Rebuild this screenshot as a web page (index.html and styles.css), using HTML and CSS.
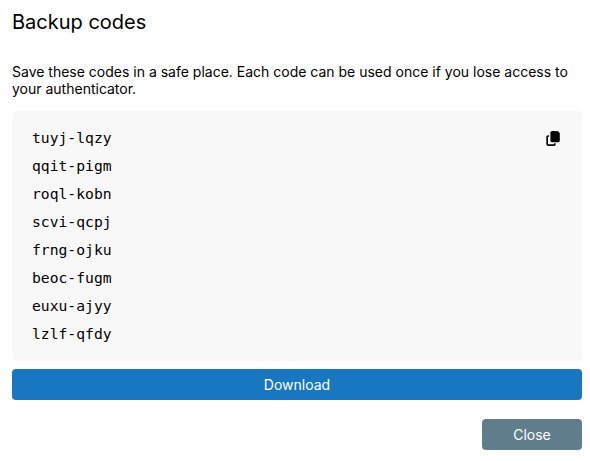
FILE: index.html
```html
<!DOCTYPE html>
<html lang="en">
	<head>
		<title>Backup codes</title>
		<meta charset="UTF-8" />
		<link rel="stylesheet" href="styles.css">
	</head>
	<body>
		<div class="dialog">
			<h2 class="title">Backup codes</h2>
			<p class="hint">Save these codes in a safe place. Each code can be used once if you lose access to your authenticator.</p>
			<div class="codes-box">
				<ul class="codes">
					<li>tuyj-lqzy</li>
					<li>qqit-pigm</li>
					<li>roql-kobn</li>
					<li>scvi-qcpj</li>
					<li>frng-ojku</li>
					<li>beoc-fugm</li>
					<li>euxu-ajyy</li>
					<li>lzlf-qfdy</li>
				</ul>
				<button class="copy-button" type="button" aria-label="Copy">
					<svg viewBox="0 0 14 15" width="14" height="15">
						<path d="M6 0H11Q11.800 0 12.400 .6L13.300 1.500Q13.800 2 13.800 2.800V9.600Q13.800 11.200 12.200 11.200H6Q4.400 11.200 4.400 9.600V1.600Q4.400 0 6 0Z"/>
						<path d="M3 4.200H2Q.3 4.200 .3 5.900V13.100Q.3 14.900 2 14.900H8Q9.700 14.900 9.700 13.200V12.300H8.200V13.300H2V5.800H3Z"/>
					</svg>
				</button>
			</div>
			<button class="button download-button" type="button">Download</button>
			<!-- Action Buttons -->
			<div class="actions">
				<button class="button close-button" type="button">Close</button>
			</div>
		</div>
	</body>
</html>
```

FILE: styles.css
```css
body {
	margin: 0;
	background-color: #fff;
	color: #000;
	font-family: Inter, sans-serif;
	font-size: 14px;
}

.dialog {
	padding: 10px 8px 0 12px;
}

.title {
	margin: 0;
	font-size: 20px;
	font-weight: 400;
	line-height: 24px;
}

.hint {
	margin: 29px 0 14px;
	line-height: 17px;
}

.codes-box {
	display: flex;
	justify-content: space-between;
	align-items: flex-start;
	box-sizing: border-box;
	height: 250px;
	padding: 13px 22px 13px 20px;
	border-radius: 4px;
	background-color: #f8f8f8;
}

.codes {
	margin: 0;
	padding: 0;
	list-style: none;
	font-family: "DejaVu Sans Mono", monospace;
	font-size: 14.7px;
	line-height: 28px;
}

.copy-button {
	display: flex;
	margin: 7px 0 0;
	padding: 0;
	border: none;
	background: none;
	cursor: pointer;
}

.button {
	height: 31px;
	padding: 0;
	border: none;
	border-radius: 4px;
	color: white;
	font-family: inherit;
	font-size: 14px;
	cursor: pointer;
}

.download-button {
	display: block;
	width: 100%;
	margin-top: 8px;
	background-color: #1976c0;
}

.actions {
	display: flex;
	justify-content: flex-end;
	margin-top: 19px;
}

.close-button {
	width: 100px;
	background-color: #607d8b;
}
```
